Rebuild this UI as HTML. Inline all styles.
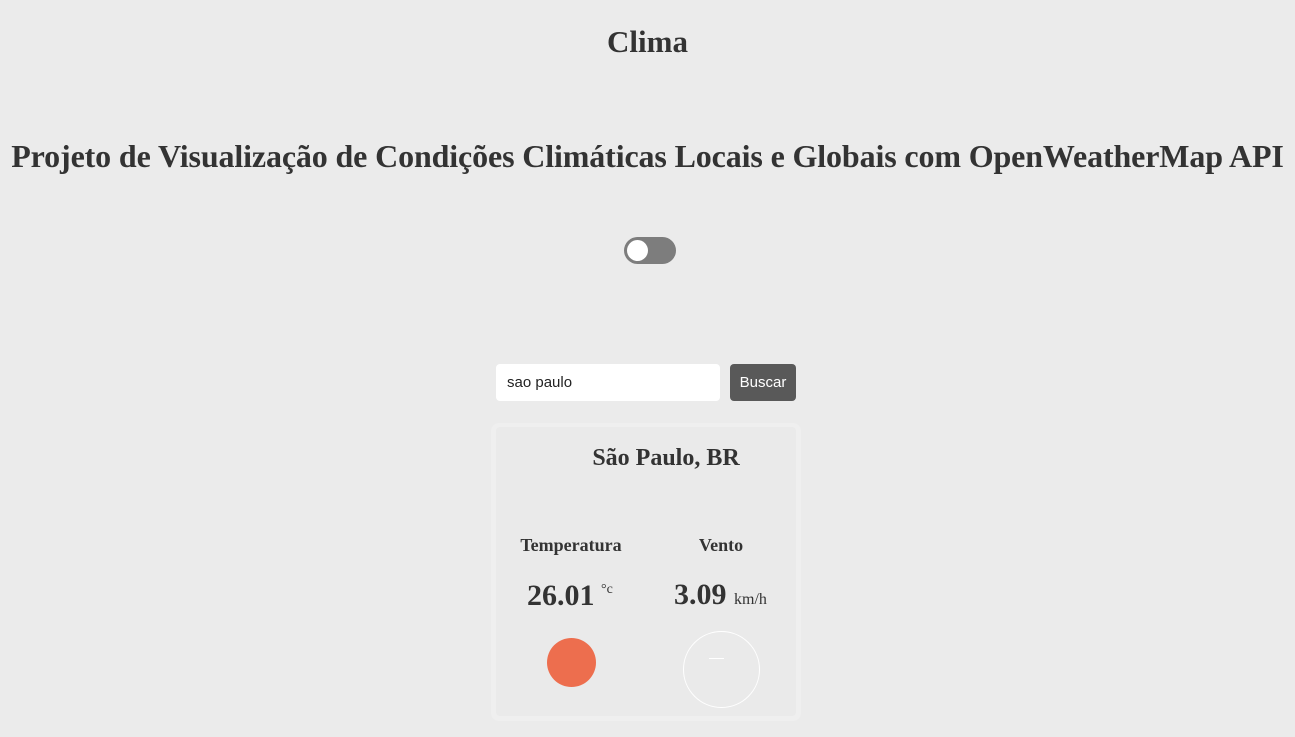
<!DOCTYPE html>
<html><head><meta charset="utf-8"><style>
body{margin:0;width:1295px;height:737px;background:#ebebeb;font-family:"Liberation Serif",serif;color:#333;position:relative;overflow:hidden}
.a{position:absolute;white-space:nowrap}
</style></head><body>
<div class="a" style="left:0;width:1295px;top:24px;text-align:center;font-size:31px;font-weight:bold;">Clima</div>
<div class="a" style="left:0;width:1295px;top:138px;text-align:center;font-size:32px;font-weight:bold;letter-spacing:-0.13px">Projeto de Visualização de Condições Climáticas Locais e Globais com OpenWeatherMap API</div>
<div class="a" style="left:624px;top:237px;width:52px;height:27px;border-radius:14px;background:#7d7d7d"></div>
<div class="a" style="left:627px;top:240px;width:21px;height:21px;border-radius:50%;background:#fff"></div>
<div class="a" style="left:496px;top:364px;width:224px;height:37px;background:#fff;border-radius:4px;font-family:'Liberation Sans',sans-serif;font-size:15px;line-height:37px;color:#222;box-sizing:border-box;padding-left:11px">sao paulo</div>
<div class="a" style="left:730px;top:364px;width:66px;height:37px;background:#595959;border-radius:4px;font-family:'Liberation Sans',sans-serif;font-size:15px;line-height:37px;color:#fff;text-align:center">Buscar</div>
<div class="a" style="left:491px;top:423px;width:310px;height:298px;background:#efefef;border-radius:8px"></div>
<div class="a" style="left:496px;top:427px;width:300px;height:289px;background:#eaeaea;border-radius:4px"></div>
<div class="a" style="left:496px;width:340px;top:445px;text-align:center;font-size:24px;font-weight:bold">São Paulo, BR</div>
<div class="a" style="left:511px;width:120px;top:535px;text-align:center;font-size:18px;font-weight:bold">Temperatura</div>
<div class="a" style="left:661px;width:120px;top:535px;text-align:center;font-size:18px;font-weight:bold">Vento</div>
<div class="a" style="left:527px;top:579px;font-size:30px;font-weight:bold">26.01</div>
<div class="a" style="left:601px;top:582px;font-size:14px">°c</div>
<div class="a" style="left:674px;top:578px;font-size:30px;font-weight:bold">3.09</div>
<div class="a" style="left:734px;top:591px;font-size:16px">km/h</div>
<div class="a" style="left:547px;top:638px;width:49px;height:49px;border-radius:50%;background:#ed6e4e"></div>
<div class="a" style="left:683px;top:631px;width:75px;height:75px;border-radius:50%;border:1px solid #fff"></div>
<div class="a" style="left:709px;top:658px;width:15px;height:1px;background:#fff"></div>
</body></html>
